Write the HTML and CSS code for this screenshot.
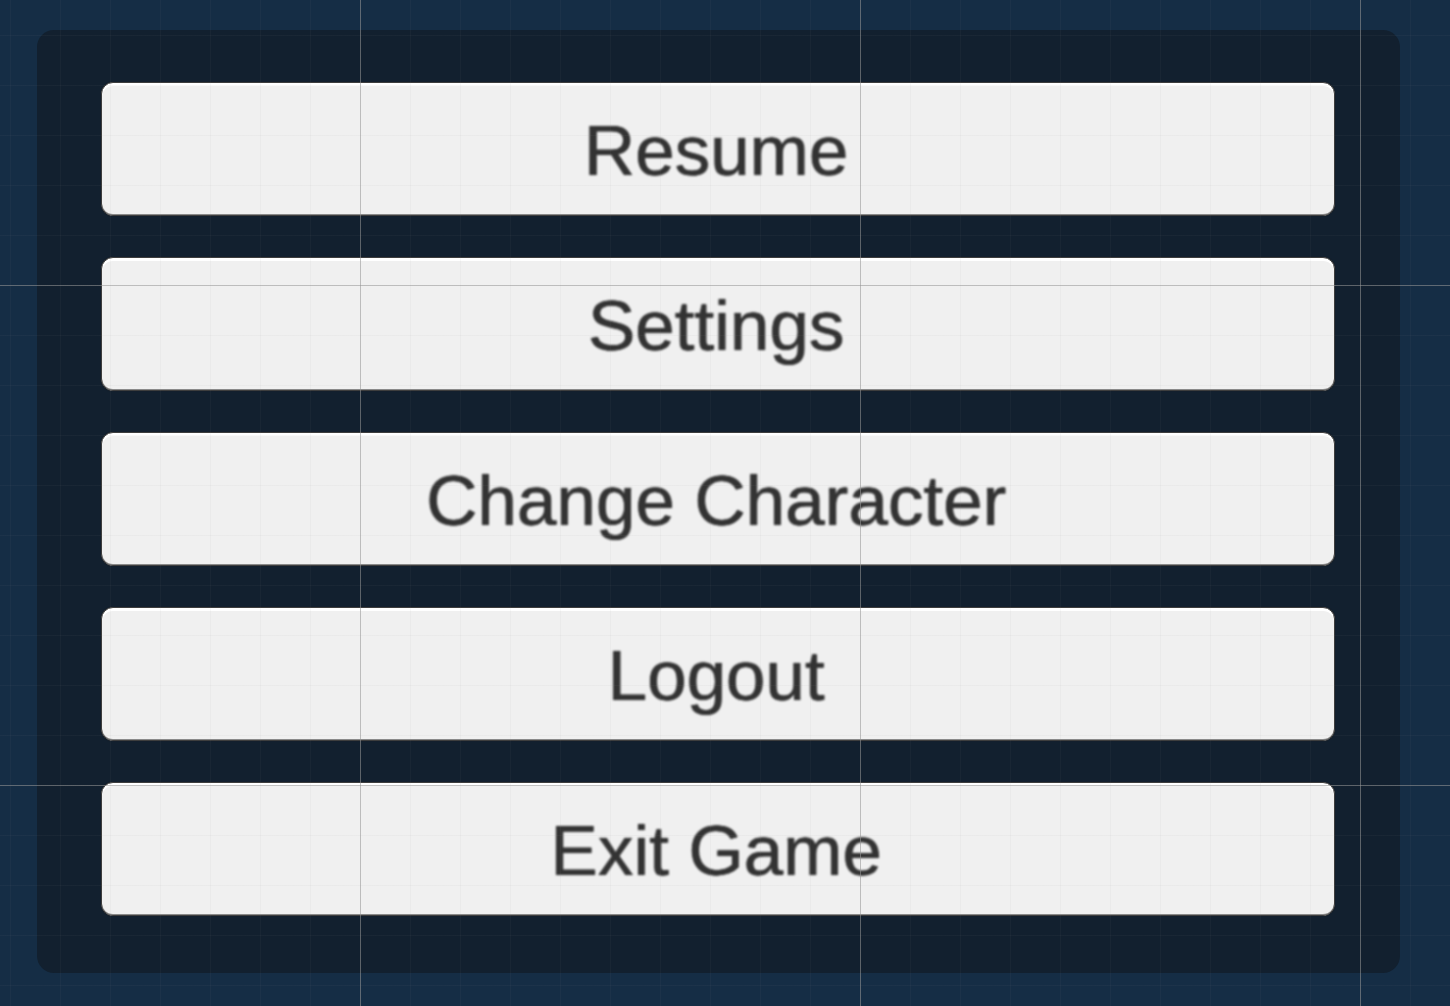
FILE: index.html
```html
<!DOCTYPE html>
<html>
<head>
<meta charset="utf-8">
<link rel="stylesheet" href="styles.css">
</head>
<body>
<div class="scene">
  <div class="panel">
    <div class="btn"><span class="label">Resume</span></div>
    <div class="btn"><span class="label">Settings</span></div>
    <div class="btn"><span class="label">Change Character</span></div>
    <div class="btn"><span class="label">Logout</span></div>
    <div class="btn"><span class="label">Exit Game</span></div>
  </div>
  <div class="grid"></div>
</div>
</body>
</html>
```
FILE: styles.css
```css
html, body {
  margin: 0;
  padding: 0;
  background: #152d45;
}
.scene {
  position: relative;
  width: 1450px;
  height: 1006px;
  padding: 30px 50px 33px 37px;
  box-sizing: border-box;
  overflow: hidden;
}
.panel {
  height: 100%;
  background: #12202f;
  border-radius: 17px;
  box-sizing: border-box;
  padding: 52px 65px 57px 64px;
  display: flex;
  flex-direction: column;
  gap: 41px;
}
.btn {
  height: 134px;
  box-sizing: border-box;
  background: #f0f0f0;
  border: 1px solid #3e3e3e;
  border-radius: 12px;
  box-shadow: inset 0 3px 0 #ffffff, inset 0 -1px 0 #8a8a8a, 0 0 1px #222;
  display: flex;
  align-items: center;
  justify-content: center;
}
.label {
  display: inline-block;
  font-family: "Liberation Sans", Arial, sans-serif;
  font-size: 71px;
  line-height: 1;
  color: #333333;
  text-shadow: 0 0 1px #333, 0.5px 0 0 #333;
  filter: blur(0.8px);
  position: relative;
  top: 1px;
  left: -2px;
}
.grid {
  position: absolute;
  inset: 0;
  pointer-events: none;
  background-image:
    linear-gradient(to right, rgba(150,150,150,0.55) 1px, transparent 1px),
    linear-gradient(to bottom, rgba(150,150,150,0.55) 1px, transparent 1px),
    linear-gradient(to right, rgba(140,140,140,0.06) 1px, transparent 1px),
    linear-gradient(to bottom, rgba(140,140,140,0.06) 1px, transparent 1px);
  background-size: 500px 500px, 500px 500px, 50px 50px, 50px 50px;
  background-position: 360px 285px, 360px 285px, 10px 35px, 10px 35px;
}
```
